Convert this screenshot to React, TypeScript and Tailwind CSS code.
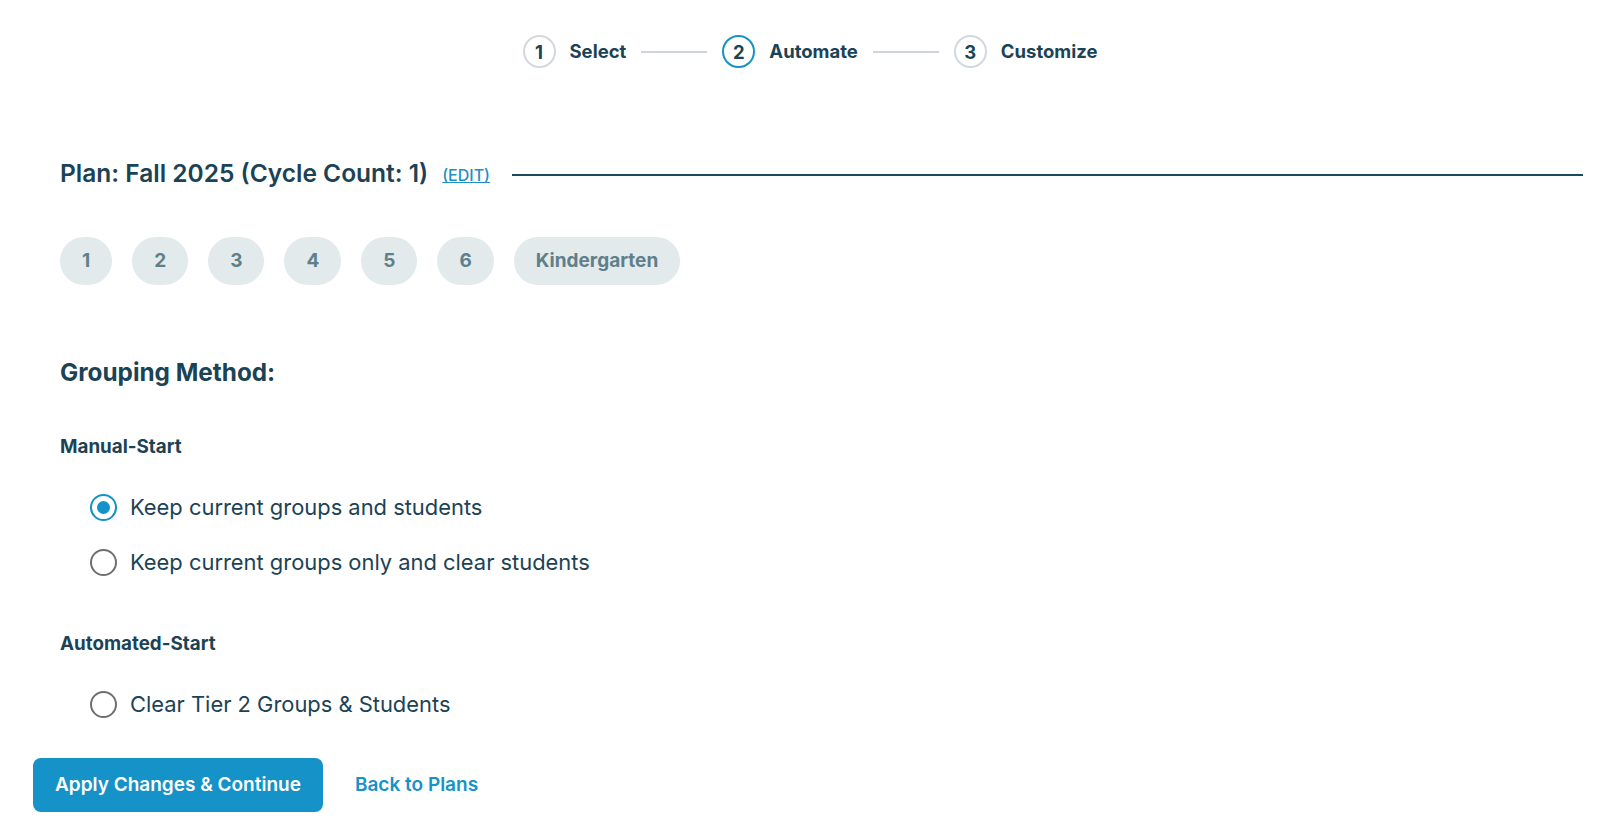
import React, { useState } from 'react';

const steps = [
  { n: 1, label: 'Select' },
  { n: 2, label: 'Automate' },
  { n: 3, label: 'Customize' },
];

const grades = ['1', '2', '3', '4', '5', '6', 'Kindergarten'];

interface RadioRowProps {
  label: string;
  checked: boolean;
  onSelect: () => void;
}

const RadioRow: React.FC<RadioRowProps> = ({ label, checked, onSelect }) => (
  <label className="flex items-center gap-[13px] h-9 cursor-pointer" onClick={onSelect}>
    <span
      className={`flex items-center justify-center w-[27px] h-[27px] rounded-full border-2 ${
        checked ? 'border-[#1592c7]' : 'border-[#6f6f6f]'
      }`}
    >
      {checked && <span className="block w-[13px] h-[13px] rounded-full bg-[#1592c7]"></span>}
    </span>
    <span className="text-[21.9px] text-[#1b4355]">{label}</span>
  </label>
);

export default function App() {
  const [method, setMethod] = useState('keep-all');

  return (
    <div className="min-h-screen w-full bg-white font-['Inter',sans-serif] text-[#1b4355]">
      {/* Stepper */}
      <div className="flex items-center justify-center pt-[35px]">
        {steps.map((s, i) => (
          <div key={s.n} className="flex items-center">
            <span
              className={`flex items-center justify-center w-[33px] h-[33px] pt-[2px] rounded-full border-2 text-[18.5px] font-bold leading-none ${
                s.n === 2 ? 'border-[#1592c7]' : 'border-[#d3d8df]'
              }`}
            >
              {s.n}
            </span>
            <span className="ml-[14px] text-[18.5px] font-bold">{s.label}</span>
            {i < steps.length - 1 && <span className="mx-[15px] block w-[66px] h-[2px] bg-[#cfd4dc]"></span>}
          </div>
        ))}
      </div>

      <div className="pl-[60px] pr-[37px]">
        {/* Plan heading */}
        <div className="flex items-center mt-[89px]">
          <h2 className="text-[24.5px] font-semibold leading-8">Plan: Fall 2025 (Cycle Count: 1)</h2>
          <a href="#" className="ml-[14px] mt-1 text-[16px] font-medium text-[#1f8fc4] underline">
            (EDIT)
          </a>
          <span className="ml-[22px] mt-1 flex-1 h-[1.5px] bg-[#1d4a5e]"></span>
        </div>

        {/* Grade chips */}
        <div className="flex gap-5 mt-[48px]">
          {grades.map((g) => (
            <span
              key={g}
              className="flex items-center h-12 px-[22px] rounded-full bg-[#e3eaec] text-[19px] font-bold text-[#5f7f8a]"
            >
              {g}
            </span>
          ))}
        </div>

        {/* Grouping method */}
        <h3 className="mt-[71px] text-[24.3px] font-bold leading-8">Grouping Method:</h3>

        <h4 className="mt-[47px] text-[18.8px] font-bold leading-6">Manual-Start</h4>
        <div className="mt-[30px] pl-[30px] flex flex-col gap-[19px]">
          <RadioRow
            label="Keep current groups and students"
            checked={method === 'keep-all'}
            onSelect={() => setMethod('keep-all')}
          />
          <RadioRow
            label="Keep current groups only and clear students"
            checked={method === 'keep-groups'}
            onSelect={() => setMethod('keep-groups')}
          />
        </div>

        <h4 className="mt-[52px] text-[18.8px] font-bold leading-6">Automated-Start</h4>
        <div className="mt-[30px] pl-[30px]">
          <RadioRow
            label="Clear Tier 2 Groups & Students"
            checked={method === 'clear'}
            onSelect={() => setMethod('clear')}
          />
        </div>
      </div>

      {/* Footer actions */}
      <div className="flex items-center px-[33px] mt-[36px]">
        <button className="h-[54px] px-[22px] rounded-lg bg-[#1592c7] text-white text-[19px] font-semibold">
          Apply Changes &amp; Continue
        </button>
        <a href="#" className="ml-[32px] text-[19px] font-semibold text-[#1592c7]">
          Back to Plans
        </a>
      </div>
    </div>
  );
}
